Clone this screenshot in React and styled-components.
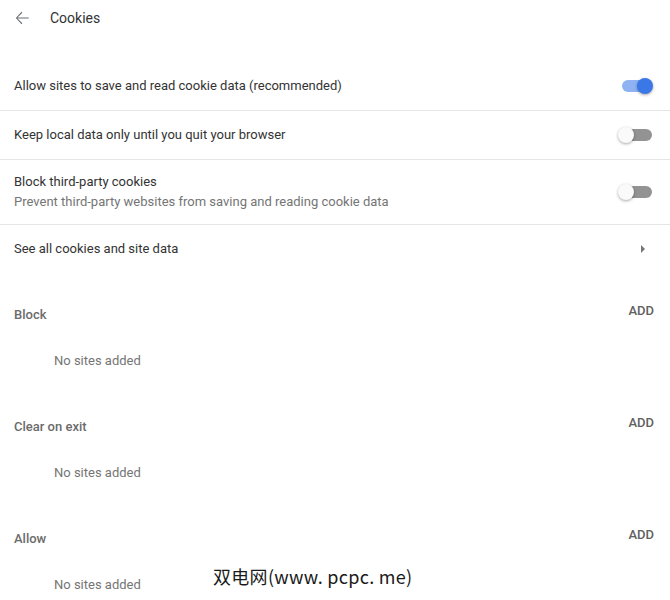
import React from "react";
import styled, { createGlobalStyle } from "styled-components";

const GlobalStyle = createGlobalStyle`
  html, body {
    margin: 0;
    padding: 0;
    background: #fff;
  }
  body {
    font-family: Roboto, "Liberation Sans", Arial, sans-serif;
    color: #333;
  }
`;

const Page = styled.div`
  position: relative;
  width: 670px;
  height: 600px;
  overflow: hidden;
  background: #fff;
`;

const Header = styled.div`
  height: 36px;
  display: flex;
  align-items: center;
  padding-left: 12px;
  margin-bottom: 26px;
`;

const BackButton = styled.span`
  display: flex;
  width: 20px;
  height: 20px;
  margin-right: 18px;
  color: #6a6d70;
`;

const Title = styled.h1`
  margin: 0;
  font-size: 14px;
  font-weight: 400;
  color: #333;
`;

const List = styled.div`
  display: flex;
  flex-direction: column;
`;

const Row = styled.div`
  display: flex;
  align-items: center;
  justify-content: space-between;
  min-height: ${(p) => (p.$tall ? "64px" : "48px")};
  padding: 0 17px 0 14px;
  border-top: ${(p) => (p.$first ? "none" : "1px solid #e6e6e6")};
  font-size: 13px;
  line-height: 20px;
`;

const RowText = styled.div`
  display: flex;
  flex-direction: column;
`;

const Primary = styled.span`
  color: #333;
`;

const Secondary = styled.span`
  color: #757575;
`;

const Track = styled.span`
  position: relative;
  display: inline-block;
  width: 30px;
  height: 12px;
  border-radius: 6px;
  background: ${(p) => (p.$on ? "#8fb2f3" : "#939393")};
  margin-right: 1px;
`;

const Knob = styled.span`
  position: absolute;
  top: -2px;
  left: ${(p) => (p.$on ? "15px" : "-4px")};
  width: 16px;
  height: 16px;
  border-radius: 50%;
  background: ${(p) => (p.$on ? "#3b78e7" : "#fafafa")};
  box-shadow: 0 1px 3px rgba(0, 0, 0, 0.35);
`;

const Toggle = ({ on }) => (
  <Track $on={on}>
    <Knob $on={on} />
  </Track>
);

const Arrow = styled.span`
  width: 0;
  height: 0;
  border-top: 4px solid transparent;
  border-bottom: 4px solid transparent;
  border-left: 4px solid #777;
  margin-right: 8px;
`;

const Section = styled.div`
  padding-top: 30px;
`;

const SectionHead = styled.div`
  height: 20px;
  display: flex;
  justify-content: space-between;
  align-items: flex-start;
  padding: 0 16px 0 14px;
`;

const SectionLabel = styled.span`
  margin-top: 4px;
  font-size: 13px;
  line-height: 16px;
  font-weight: 500;
  color: #6b6b6b;
`;

const AddButton = styled.span`
  font-size: 13px;
  line-height: 16px;
  font-weight: 500;
  color: #616161;
`;

const Empty = styled.div`
  margin-top: 30px;
  padding: 0 0 16px 54px;
  font-size: 13px;
  line-height: 16px;
  color: #757575;
`;

const Watermark = styled.div`
  position: absolute;
  left: 213px;
  top: 564px;
  font-family: "Noto Sans CJK SC", "DejaVu Sans", sans-serif;
  font-size: 18px;
  line-height: 24px;
  letter-spacing: 0.3px;
  color: #1a1a1a;
  text-shadow: 0 0 2px #fff, 0 0 2px #fff;
  white-space: nowrap;
`;

const sections = ["Block", "Clear on exit", "Allow"];

export default function App() {
  return (
    <Page>
      <GlobalStyle />
      <Header>
        <BackButton>
          <svg width="20" height="20" viewBox="0 0 24 24" fill="currentColor">
            <path d="M20 11.4H6.6l5.8-5.8-1-1L4.6 12l6.8 7.4 1-1-5.8-5.8H20z" />
          </svg>
        </BackButton>
        <Title>Cookies</Title>
      </Header>
      <List>
        <Row $first>
          <Primary>Allow sites to save and read cookie data (recommended)</Primary>
          <Toggle on />
        </Row>
        <Row>
          <Primary>Keep local data only until you quit your browser</Primary>
          <Toggle />
        </Row>
        <Row $tall>
          <RowText>
            <Primary>Block third-party cookies</Primary>
            <Secondary>Prevent third-party websites from saving and reading cookie data</Secondary>
          </RowText>
          <Toggle />
        </Row>
        <Row>
          <Primary>See all cookies and site data</Primary>
          <Arrow />
        </Row>
      </List>
      {sections.map((s) => (
        <Section key={s}>
          <SectionHead>
            <SectionLabel>{s}</SectionLabel>
            <AddButton>ADD</AddButton>
          </SectionHead>
          <Empty>No sites added</Empty>
        </Section>
      ))}
      <Watermark>双电网(www. pcpc. me)</Watermark>
    </Page>
  );
}
